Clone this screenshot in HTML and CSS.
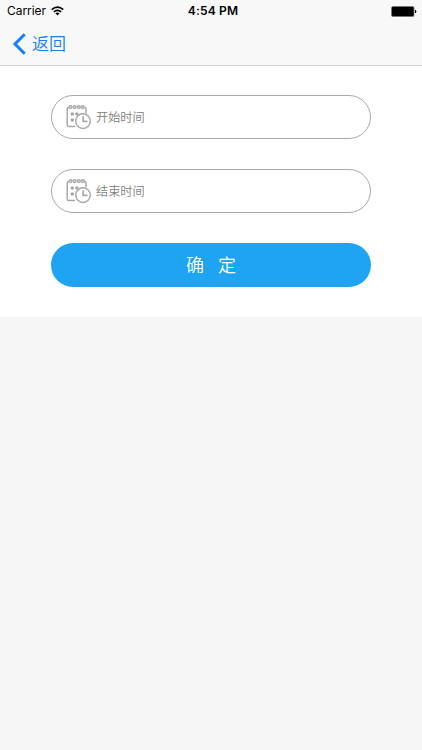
FILE: index.html
```html
<!DOCTYPE html>
<html lang="zh-CN">
<head>
    <meta charset="UTF-8">
    <meta name="viewport" content="width=device-width, initial-scale=1.0">
    <title>选择时间</title>
    <link rel="stylesheet" href="styles.css">
</head>
<body>
    <svg class="symbols" width="0" height="0">
        <symbol id="calendar" viewBox="0 0 26 26">
            <g fill="none" stroke="#a9a9a9" stroke-width="1.5" stroke-linecap="round">
                <path d="M2.6 3.4Q1.2 3.4 1.2 5V20.9Q1.2 22.6 2.9 22.6H8.6M18.6 3.4Q20 3.4 20 5V8.8"/>
                <circle cx="4.6" cy="3.1" r="1.4"/>
                <circle cx="8.7" cy="3.1" r="1.4"/>
                <circle cx="12.8" cy="3.1" r="1.4"/>
                <circle cx="16.8" cy="3.1" r="1.4"/>
                <circle cx="17" cy="17.1" r="7.3"/>
                <path d="M17.1 12.8V17.4H20.8" stroke-width="1.7"/>
            </g>
            <g fill="#a0a0a0">
                <rect x="4.8" y="8.5" width="3" height="3" rx=".8"/>
                <rect x="9.4" y="8.5" width="3" height="3" rx=".8"/>
                <rect x="4.8" y="14.5" width="3" height="3" rx=".8"/>
            </g>
        </symbol>
    </svg>

    <header class="header">
        <div class="status-bar">
            <div class="carrier">
                <span>Carrier</span>
                <svg width="13" height="10" viewBox="0 0 13 10">
                    <g fill="none" stroke="#000" stroke-width="1.6">
                        <path d="M.7 3.7Q6.5-1.3 12.3 3.7"/>
                        <path d="M2.8 5.9Q6.5 2.7 10.2 5.9"/>
                    </g>
                    <path d="M4.4 7.2Q6.5 5.6 8.6 7.2L6.5 9.4Z"/>
                </svg>
            </div>
            <div class="clock">4:54 PM</div>
            <div class="battery">
                <svg width="26" height="11" viewBox="0 0 26 11">
                    <rect x=".5" y=".5" width="22.5" height="10" rx="1.5" fill="#000" stroke="#777" stroke-width=".8"/>
                    <path d="M24 3.8Q25.3 4 25.3 5.5T24 7.2Z"/>
                </svg>
            </div>
        </div>
        <a class="back" href="#">
            <svg width="14" height="22" viewBox="0 0 14 22">
                <path d="M12.7 1.3L3 11L12.7 20.7" fill="none" stroke="#147efb" stroke-width="3"/>
            </svg>
            <span>返回</span>
        </a>
    </header>

    <main class="panel">
        <div class="field">
            <svg class="icon"><use href="#calendar"/></svg>
            <span>开始时间</span>
        </div>
        <div class="field">
            <svg class="icon"><use href="#calendar"/></svg>
            <span>结束时间</span>
        </div>
        <button class="submit"><span>确</span><span>定</span></button>
    </main>
</body>
</html>
```

FILE: styles.css
```css
* {
    box-sizing: border-box;
    margin: 0;
    padding: 0;
}

body {
    min-height: 100vh;
    background-color: #f5f5f5;
    font-family: Inter, "Noto Sans CJK SC", sans-serif;
}

svg {
    display: block;
}

.symbols {
    position: absolute;
}

.header {
    height: 66px;
    background-color: #f8f8f8;
    border-bottom: 1px solid #d5d5d5;
}

.status-bar {
    display: grid;
    grid-template-columns: 1fr auto 1fr;
    align-items: center;
    height: 22px;
    padding: 0 5px 0 7px;
    font-size: 12px;
    line-height: 22px;
}

.carrier {
    display: flex;
    align-items: center;
    gap: 5px;
    letter-spacing: -0.05px;
}

.clock {
    padding-left: 2px;
    font-weight: 600;
    letter-spacing: 0.2px;
}

.battery {
    justify-self: end;
}

.back {
    display: inline-flex;
    align-items: center;
    gap: 6px;
    height: 43px;
    padding-left: 12px;
    color: #147efb;
    font-size: 17px;
    font-weight: 350;
    line-height: 43px;
    text-decoration: none;
}

.back span {
    padding-top: 1px;
}

.panel {
    display: flex;
    flex-direction: column;
    gap: 29.5px;
    height: 250.5px;
    padding: 28.8px 51px 0;
    background-color: #fff;
}

.field {
    display: flex;
    align-items: center;
    gap: 4px;
    height: 44.5px;
    padding-left: 14px;
    border: 1px solid #a9a9a9;
    border-radius: 23px;
    color: #808080;
    font-size: 12.2px;
    font-weight: 350;
}

.icon {
    width: 26px;
    height: 26px;
}

.field span {
    padding-bottom: 1px;
}

.submit {
    display: flex;
    justify-content: center;
    align-items: center;
    gap: 14px;
    height: 44.5px;
    padding-bottom: 2px;
    border: none;
    border-radius: 23px;
    background-color: #1ea4f2;
    color: #fff;
    font-family: inherit;
    font-size: 18px;
    font-weight: 350;
}
```
